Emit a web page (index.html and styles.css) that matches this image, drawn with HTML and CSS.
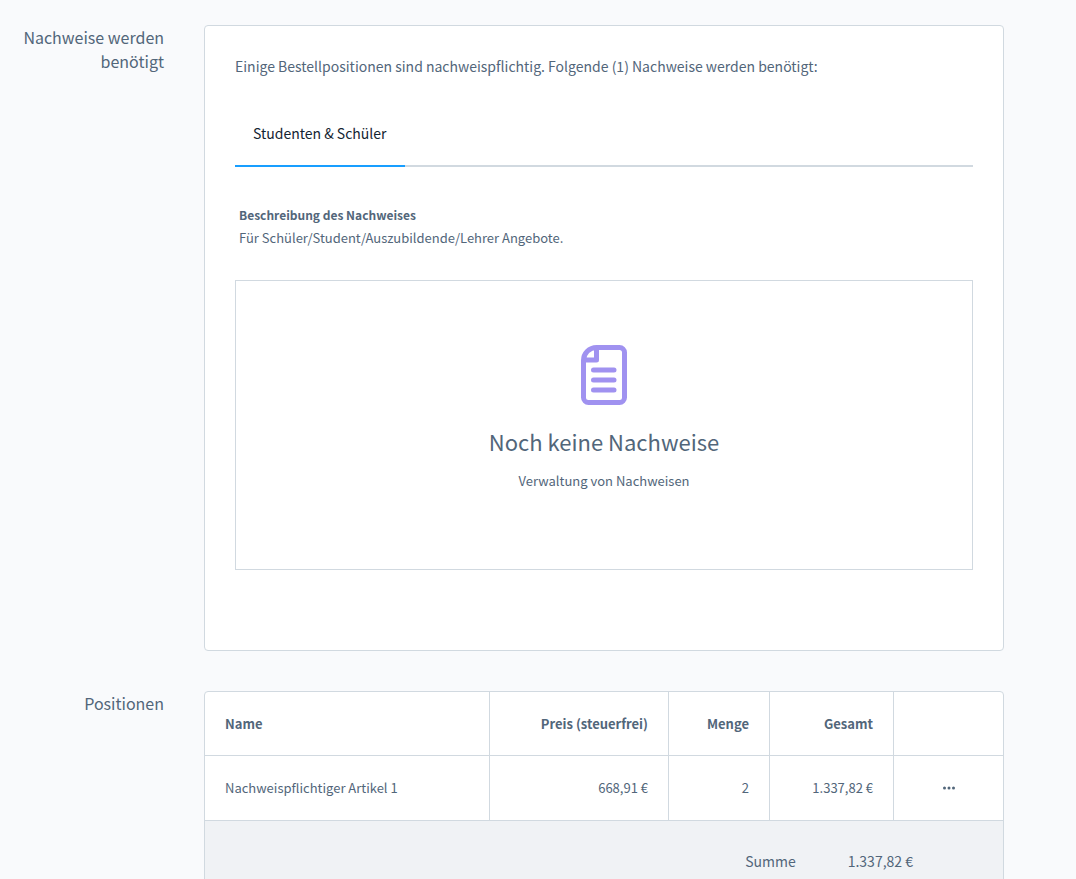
FILE: index.html
```html
<!DOCTYPE html>
<html lang="de">
<head>
<meta charset="utf-8">
<meta name="viewport" content="width=device-width, initial-scale=1">
<title>Bestellung – Nachweise</title>
<link rel="stylesheet" href="styles.css">
</head>
<body>
<main class="page">
  <section class="section">
    <h2 class="section-title">Nachweise werden benötigt</h2>
    <div class="card proofs">
      <p class="intro">Einige Bestellpositionen sind nachweispflichtig. Folgende (1) Nachweise werden benötigt:</p>
      <div class="tabs" role="tablist">
        <button class="tab" type="button" role="tab" aria-selected="true">Studenten &amp; Schüler</button>
      </div>
      <div class="description">
        <h3 class="description-title">Beschreibung des Nachweises</h3>
        <p class="description-text">Für Schüler/Student/Auszubildende/Lehrer Angebote.</p>
      </div>
      <div class="empty">
        <svg class="empty-icon" viewBox="0 0 46 60" width="46" height="60" fill="none" stroke="currentColor" stroke-width="5" stroke-linecap="round" stroke-linejoin="round" aria-hidden="true">
          <path d="M15.500 2.500H38.500a5 5 0 0 1 5 5V52.500a5 5 0 0 1-5 5H7.500a5 5 0 0 1-5-5V15.500a13 13 0 0 1 13-13V15H2.500"/>
          <path d="M12.500 25H33M12.500 35H33M12.500 45H33"/>
        </svg>
        <h3 class="empty-title">Noch keine Nachweise</h3>
        <p class="empty-text">Verwaltung von Nachweisen</p>
      </div>
    </div>
  </section>
  <section class="section">
    <h2 class="section-title">Positionen</h2>
    <div class="card positions">
      <table class="table">
        <colgroup><col><col class="col-price"><col class="col-count"><col class="col-total"><col class="col-action"></colgroup>
        <thead>
          <tr><th scope="col">Name</th><th class="num" scope="col">Preis (steuerfrei)</th><th class="num" scope="col">Menge</th><th class="num" scope="col">Gesamt</th><td></td></tr>
        </thead>
        <tbody>
          <tr>
            <td>Nachweispflichtiger Artikel 1</td><td class="num">668,91 €</td><td class="num">2</td><td class="num">1.337,82 €</td>
            <td class="action"><button class="menu" type="button" aria-label="Aktionen"><svg viewBox="0 0 12 4" width="12" height="4" fill="currentColor" aria-hidden="true"><circle cx="1.500" cy="2" r="1.500"/><circle cx="6" cy="2" r="1.500"/><circle cx="10.500" cy="2" r="1.500"/></svg></button></td>
          </tr>
        </tbody>
      </table>
      <dl class="summary"><dt>Summe</dt><dd>1.337,82 €</dd></dl>
    </div>
  </section>
</main>
</body>
</html>
```
FILE: styles.css
```css
* { box-sizing: border-box; }
body {
  margin: 0;
  background: #f9fafc;
  color: #52667a;
  font-family: "Source Sans Pro", "Noto Sans CJK SC", "Open Sans", sans-serif;
  font-size: 13px;
  line-height: 24px;
}
h2, h3, p, dl, dd { margin: 0; font-weight: 400; }
button { font: inherit; color: inherit; background: none; border: 0; padding: 0; cursor: pointer; }
.page {
  display: grid;
  gap: 40px;
  padding: 25px 72px 40px 0;
}
.section {
  display: grid;
  grid-template-columns: 164px minmax(0, 1fr);
  column-gap: 40px;
  align-items: start;
}
.section-title { font-size: 16px; text-align: right; }
.card {
  background: #fff;
  border: 1px solid #d1d9e0;
  border-radius: 4px;
  overflow: hidden;
}
.proofs { padding: 28px 30px 80px; }
.intro { font-size: 14px; }
.tabs {
  display: flex;
  margin-top: 28px;
  box-shadow: inset 0 -2px #d1d9e0;
}
.tab {
  padding: 15px 18px 20px;
  border-bottom: 2px solid #189eff;
  color: #142432;
  font-size: 14px;
}
.description { padding: 36px 4px 0; }
.description-title, .description-text { line-height: 23px; }
.description-title { font-size: 12px; font-weight: 600; }
.empty {
  display: flex;
  flex-direction: column;
  align-items: center;
  margin-top: 31px;
  padding: 64px 20px 76px;
  border: 1px solid #d1d9e0;
}
.empty-icon { color: #a092f0; }
.empty-title { margin-top: 20px; font-size: 22px; line-height: 32px; }
.empty-text { margin-top: 12px; }
.table { width: 100%; border-collapse: separate; border-spacing: 0; table-layout: fixed; }
.col-price { width: 179px; }
.col-count { width: 101px; }
.col-total { width: 124px; }
.col-action { width: 109px; }
th, td {
  padding: 20px;
  text-align: left;
  border-right: 1px solid #d1d9e0;
  border-bottom: 1px solid #d1d9e0;
}
th { font-weight: 700; line-height: 23px; }
th:last-child, td:last-child { border-right: 0; }
.table .num { text-align: right; }
.table .action { text-align: center; }
.menu { display: inline-flex; align-items: center; justify-content: center; width: 24px; height: 24px; vertical-align: top; }
.summary {
  display: flex;
  justify-content: flex-end;
  gap: 52px;
  padding: 28px 90px 40px;
  background: #f0f2f5;
  font-size: 14px;
}
```
